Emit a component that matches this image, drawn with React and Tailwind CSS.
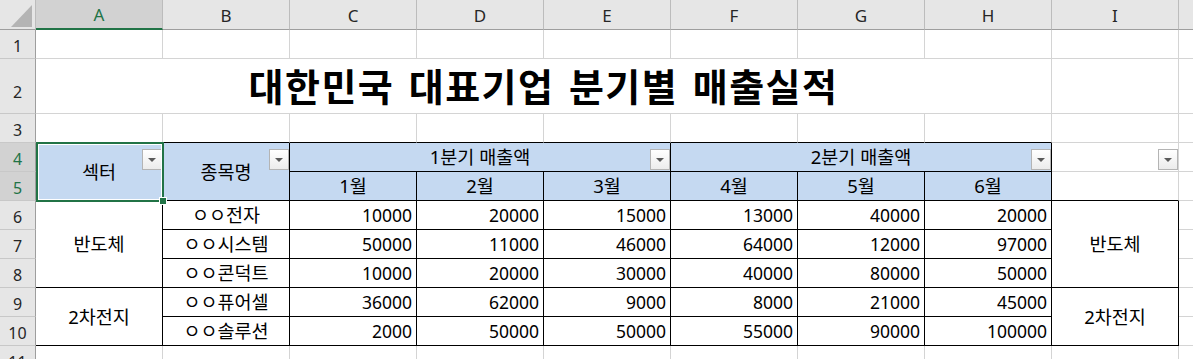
import React from 'react';
import clsx from 'clsx';

const LETTERS = ['A', 'B', 'C', 'D', 'E', 'F', 'G', 'H', 'I', 'J'];

const sales = [
  { name: 'ㅇㅇ전자', v: [10000, 20000, 15000, 13000, 40000, 20000] },
  { name: 'ㅇㅇ시스템', v: [50000, 11000, 46000, 64000, 12000, 97000] },
  { name: 'ㅇㅇ콘덕트', v: [10000, 20000, 30000, 40000, 80000, 50000] },
  { name: 'ㅇㅇ퓨어셀', v: [36000, 62000, 9000, 8000, 21000, 45000] },
  { name: 'ㅇㅇ솔루션', v: [2000, 50000, 50000, 55000, 90000, 100000] },
];

// little autofilter button
const DropBtn = () => (
  <div className="absolute right-0 top-[6px] w-[20px] h-[21px] border border-[#b4b4b4] bg-linear-to-b from-white to-[#ececec] flex items-center justify-center">
    <div className="w-0 h-0 border-l-[4px] border-r-[4px] border-t-[4px] border-l-transparent border-r-transparent border-t-[#5a5a5a]" />
  </div>
);

const Cell = ({ className, rk, bk, blue, right, drop, children }) => (
  <div
    className={clsx(
      'relative flex items-center border-r border-b text-black whitespace-nowrap overflow-visible',
      right ? 'text-[17.5px]' : 'text-[18.5px]',
      rk ? 'border-r-black' : 'border-r-[#d4d4d4]',
      bk ? 'border-b-black' : 'border-b-[#d4d4d4]',
      blue ? 'bg-[#c5d9f1]' : 'bg-white',
      right ? 'justify-end pr-[4px]' : 'justify-center',
      className
    )}
  >
    {children}
    {drop && <DropBtn />}
  </div>
);

const RowHead = ({ n, sel, tall }) => (
  <div
    className={clsx(
      'flex justify-center border-r border-r-[#9e9e9e] border-b border-b-[#c8c8c8] text-[16px]',
      tall ? 'items-end pb-[9px]' : 'items-center pt-[4px]',
      sel ? 'bg-[#d2d2d2] text-[#217346]' : 'bg-[#e6e6e6] text-[#262626]'
    )}
  >
    {n}
  </div>
);

const Blank = ({ n }) => Array.from({ length: n }, (_, i) => <Cell key={i} />);

export default function App() {
  return (
    <div className="relative w-[1193px] h-[359px] overflow-hidden bg-white font-['Noto_Sans','Noto_Sans_CJK_KR',sans-serif]">
      <div className="grid grid-cols-[36px_repeat(10,127px)] grid-rows-[30px_29px_55px_repeat(9,29px)]">
        {/* column headers */}
        <div className="flex items-end justify-end pr-[3px] pb-[2px] bg-[#e6e6e6] border-r border-r-[#bcbcbc] border-b border-b-[#9e9e9e]">
          <svg width="21" height="22" viewBox="0 0 21 22">
            <polygon points="21,0 21,22 0,22" fill="#b4b4b4" />
          </svg>
        </div>
        {LETTERS.map((l, i) => (
          <div
            key={l}
            className={clsx(
              'flex items-center justify-center pt-[2px] border-r border-r-[#bcbcbc] text-[17px]',
              i === 0
                ? 'bg-[#d2d2d2] text-[#217346] border-b-2 border-b-[#217346]'
                : 'bg-[#e6e6e6] text-[#262626] border-b border-b-[#9e9e9e]'
            )}
          >
            {l}
          </div>
        ))}

        {/* row 1 */}
        <RowHead n={1} />
        <Blank n={10} />

        {/* row 2 - title */}
        <RowHead n={2} tall />
        <Cell className="col-span-8">
          <span className="text-[38px] font-bold tracking-[1.5px] [word-spacing:3px] pt-[1px]">대한민국 대표기업 분기별 매출실적</span>
        </Cell>
        <Blank n={2} />

        {/* row 3 */}
        <RowHead n={3} />
        {Array.from({ length: 8 }, (_, i) => <Cell key={i} bk />)}
        <Blank n={2} />

        {/* row 4 */}
        <RowHead n={4} sel />
        <Cell className="row-span-2" rk bk blue drop>섹터</Cell>
        <Cell className="row-span-2" rk bk blue drop>종목명</Cell>
        <Cell className="col-span-3" rk bk blue drop>1분기 매출액</Cell>
        <Cell className="col-span-3" rk bk blue drop>2분기 매출액</Cell>
        <Cell drop />
        <Cell />

        {/* row 5 */}
        <RowHead n={5} sel />
        {[1, 2, 3, 4, 5, 6].map((m) => (
          <Cell key={m} rk bk blue>{m}월</Cell>
        ))}
        <Cell bk />
        <Cell />

        {/* rows 6 - 10 */}
        {sales.map((s, i) => (
          <React.Fragment key={s.name}>
            <RowHead n={i + 6} />
            {i === 0 && <Cell className="row-span-3" rk bk>반도체</Cell>}
            {i === 3 && <Cell className="row-span-2" rk bk>2차전지</Cell>}
            <Cell rk bk>{s.name}</Cell>
            {s.v.map((v, j) => (
              <Cell key={j} rk bk right>{v}</Cell>
            ))}
            {i === 0 && <Cell className="row-span-3" rk bk>반도체</Cell>}
            {i === 3 && <Cell className="row-span-2" rk bk>2차전지</Cell>}
            <Cell />
          </React.Fragment>
        ))}

        {/* row 11 */}
        <RowHead n={11} />
        <Blank n={10} />
      </div>

      {/* active selection A4:A5 */}
      <div className="absolute left-[36px] top-[142px] w-[128px] h-[60px] border-2 border-[#217346] shadow-[inset_0_0_0_1px_white]" />
      <div className="absolute left-[159px] top-[197px] w-[8px] h-[8px] bg-[#217346] border border-white" />
    </div>
  );
}
